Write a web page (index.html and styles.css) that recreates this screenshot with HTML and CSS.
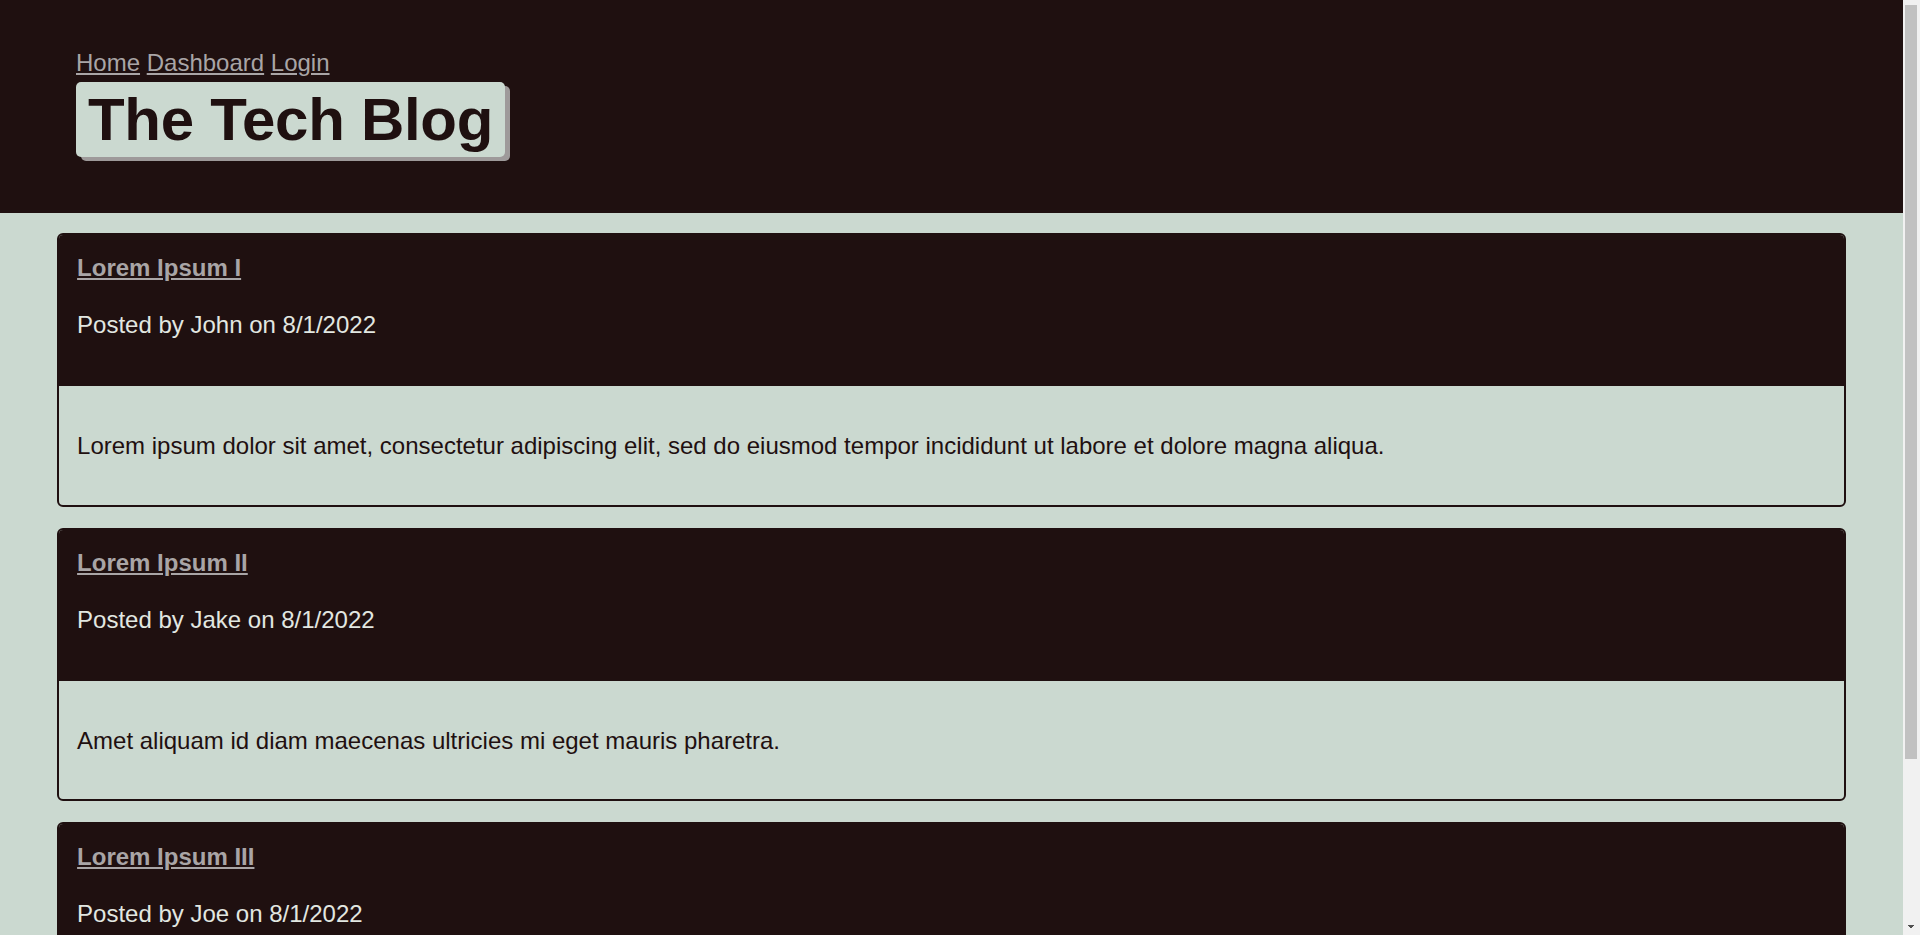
FILE: index.html
```html
<!DOCTYPE html>
<html lang="en">
<head>
<meta charset="utf-8">
<title>The Tech Blog</title>
<link rel="stylesheet" href="styles.css">
</head>
<body>
<header class="site-header">
  <nav class="nav"><a href="#">Home</a> <a href="#">Dashboard</a> <a href="#">Login</a></nav>
  <h1 class="brand">The Tech Blog</h1>
</header>
<main class="posts">
  <article class="card">
    <div class="card-head">
      <h2 class="card-title"><a href="#">Lorem Ipsum I</a></h2>
      <p class="card-meta">Posted by John on 8/1/2022</p>
    </div>
    <div class="card-body">
      <p>Lorem ipsum dolor sit amet, consectetur adipiscing elit, sed do eiusmod tempor incididunt ut labore et dolore magna aliqua.</p>
    </div>
  </article>
  <article class="card">
    <div class="card-head">
      <h2 class="card-title"><a href="#">Lorem Ipsum II</a></h2>
      <p class="card-meta">Posted by Jake on 8/1/2022</p>
    </div>
    <div class="card-body">
      <p>Amet aliquam id diam maecenas ultricies mi eget mauris pharetra.</p>
    </div>
  </article>
  <article class="card">
    <div class="card-head">
      <h2 class="card-title"><a href="#">Lorem Ipsum III</a></h2>
      <p class="card-meta">Posted by Joe on 8/1/2022</p>
    </div>
    <div class="card-body">
      <p>Egestas sed tempus urna et pharetra pharetra massa massa ultricies.</p>
    </div>
  </article>
</main>
<div class="scrollbar" aria-hidden="true">
  <div class="scrollbar-thumb"></div>
  <div class="scrollbar-track"></div>
  <div class="scrollbar-arrow"></div>
</div>
</body>
</html>
```
FILE: styles.css
```css
html {
  background: #cbd9d0;
}

body {
  margin: 0;
  padding-right: 17px;
  font-family: "Liberation Sans", Arial, sans-serif;
  background: #cbd9d0;
  color: #1f1010;
}

.site-header {
  background: #1f1010;
  padding: 49px 76px 56px;
  display: flex;
  flex-direction: column;
  align-items: flex-start;
}

.nav {
  font-size: 24px;
  line-height: normal;
}

.nav a {
  color: #a9a5a6;
  text-decoration: underline;
}

.brand {
  margin: 5px 0 0;
  font-size: 60px;
  font-weight: 700;
  letter-spacing: -0.3px;
  line-height: normal;
  padding: 3px 12px;
  background: #cbd9d0;
  color: #1f1010;
  border-radius: 5px;
  box-shadow: 5px 4px 0 #9e9a9a;
}

.posts {
  padding: 20px 3% 30px;
  display: flex;
  flex-direction: column;
  gap: 21px;
}

.card {
  border: 2px solid #1f1010;
  border-radius: 6px;
  overflow: hidden;
  font-size: 24px;
  line-height: normal;
}

.card-head {
  background: #1f1010;
  padding: 19px 18px 47px;
}

.card-title {
  margin: 0 0 29px;
  font-size: 24px;
  font-weight: 700;
  line-height: normal;
}

.card-title a {
  color: #a9a5a6;
  text-decoration: underline;
}

.card-meta {
  margin: 0;
  color: #e2e7e1;
}

.card-body {
  padding: 46px 18px 44.5px;
}

.card-body p {
  margin: 0;
  color: #1f1010;
}

.scrollbar {
  position: fixed;
  top: 0;
  right: 0;
  width: 17px;
  height: 100vh;
  background: #f1f1f1;
  display: flex;
  flex-direction: column;
  padding-top: 5px;
  box-sizing: border-box;
}

.scrollbar-thumb {
  height: 754px;
  margin: 0 3px 0 2px;
  background: #c1c1c1;
}

.scrollbar-track {
  flex: 1;
}

.scrollbar-arrow {
  height: 17px;
  background:
    linear-gradient(to top right, transparent 50%, #505050 50%) 4px 7px / 4px 4px no-repeat,
    linear-gradient(to top left, transparent 50%, #505050 50%) 8px 7px / 4px 4px no-repeat;
}
```
